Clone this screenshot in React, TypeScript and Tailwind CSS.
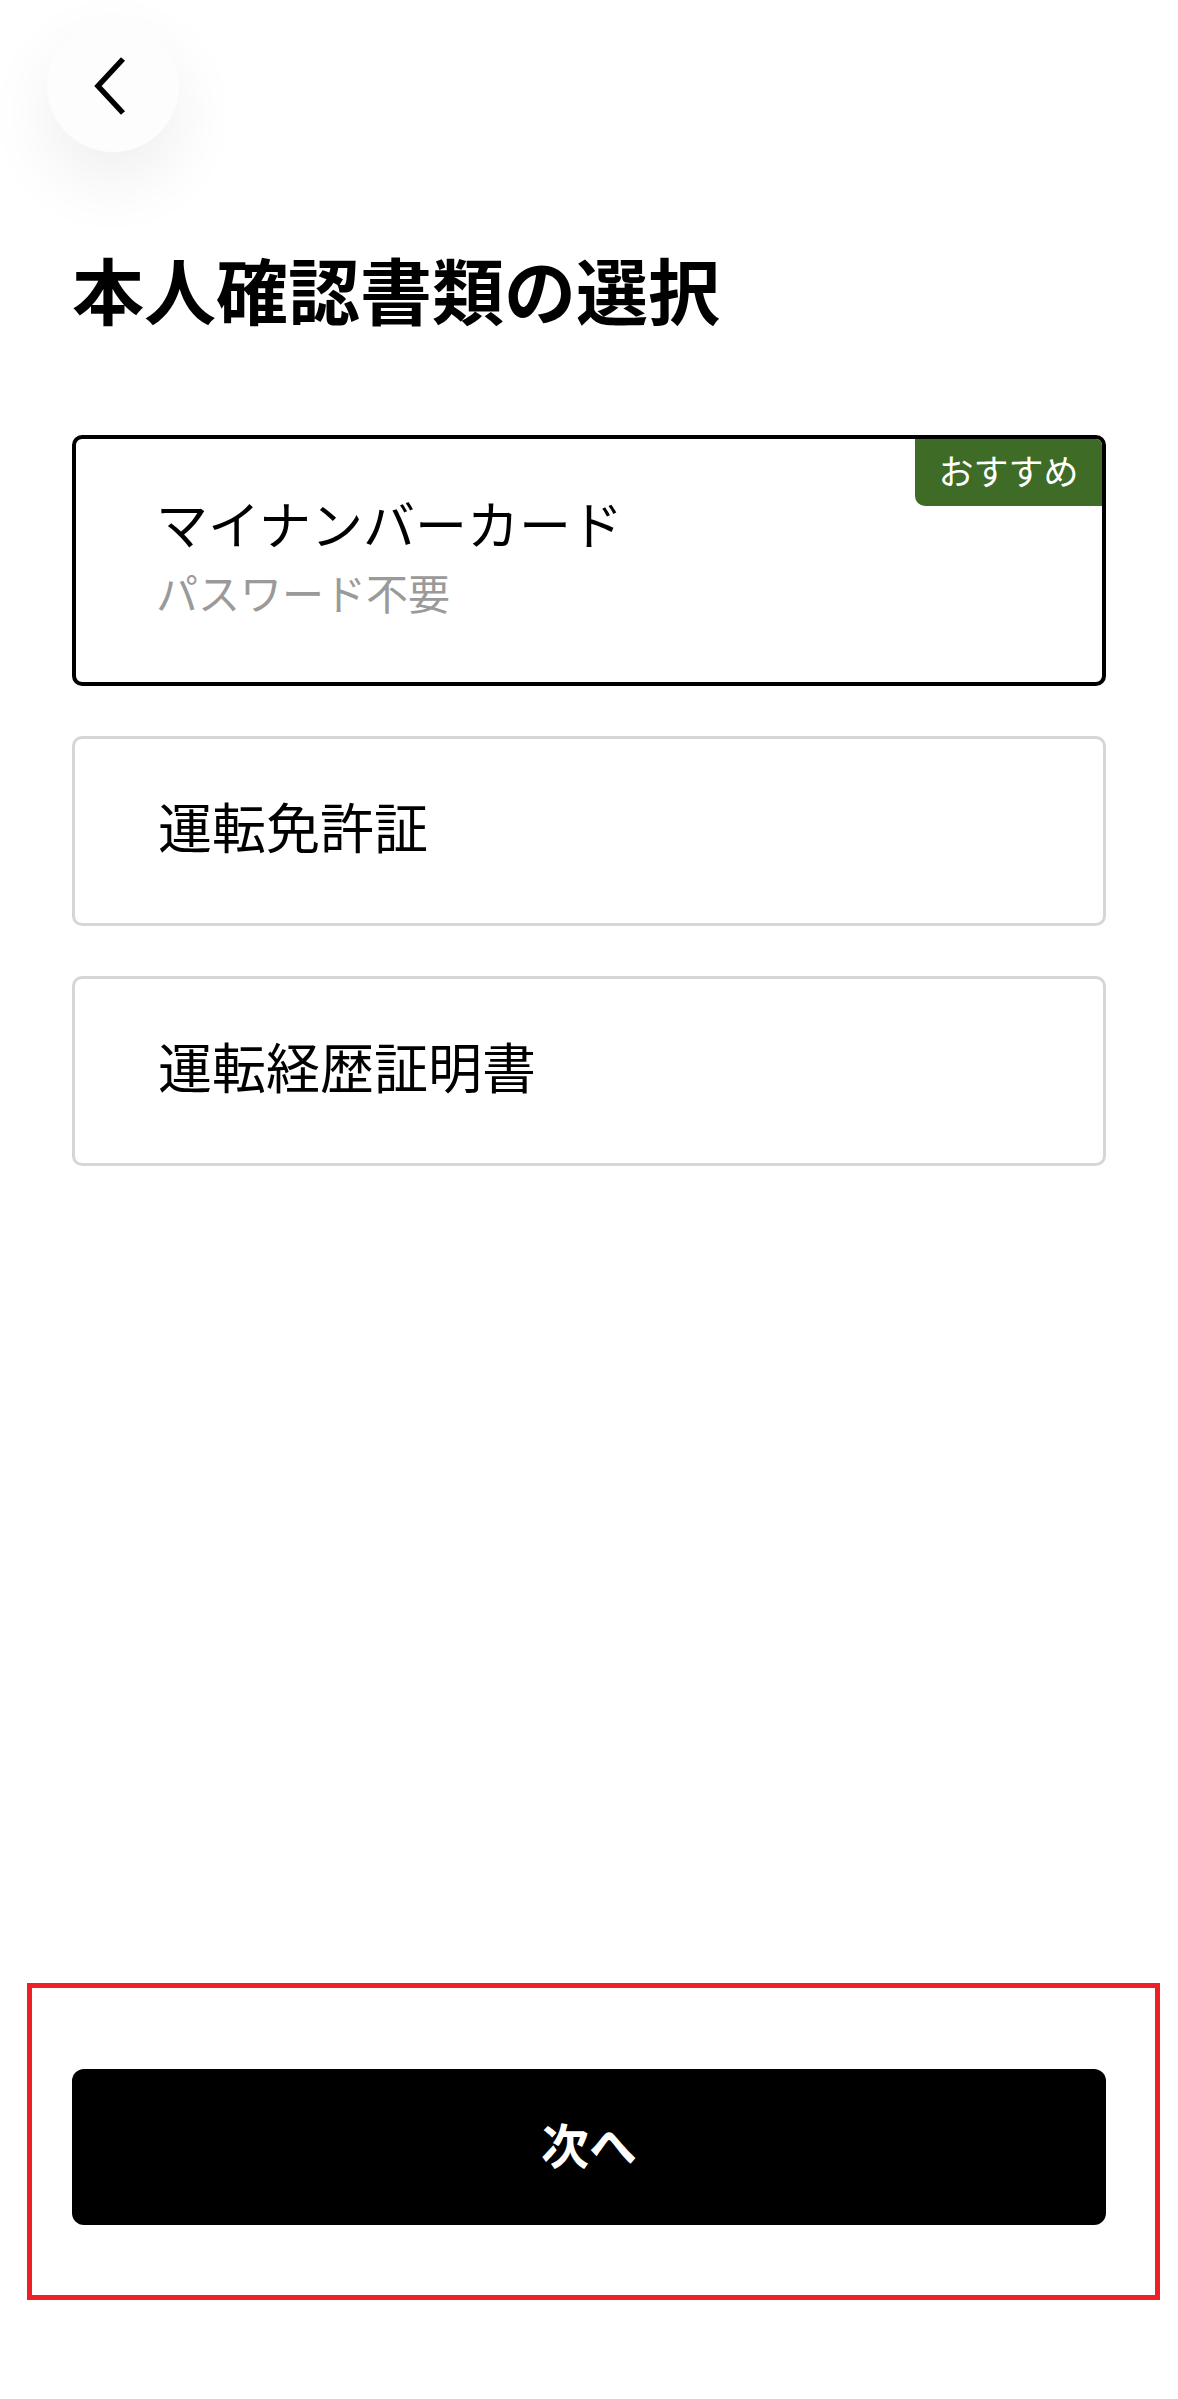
import React, { useState } from "react";

type DocOption = {
  id: string;
  label: string;
  note?: string;
  recommended?: boolean;
};

const options: DocOption[] = [
  { id: "mynumber", label: "マイナンバーカード", note: "パスワード不要", recommended: true },
  { id: "license", label: "運転免許証" },
  { id: "history", label: "運転経歴証明書" },
];

const font = { fontFamily: '"Noto Sans CJK JP", "Noto Sans", sans-serif' };

const BackButton = () => (
  <button
    aria-label="戻る"
    className="ml-[47px] mt-[20px] flex h-[132px] w-[132px] items-center justify-center rounded-full bg-[#fdfdfd] shadow-[0_28px_70px_rgba(0,0,0,0.07)]"
  >
    <svg width="40" height="60" viewBox="0 0 40 60" fill="none" className="-ml-[6px]">
      <polyline
        points="33,3 8,30 33,57"
        stroke="#000"
        strokeWidth="5.5"
        strokeLinecap="butt"
        strokeLinejoin="miter"
      />
    </svg>
  </button>
);

const OptionCard = ({
  option,
  selected,
  onSelect,
}: {
  option: DocOption;
  selected: boolean;
  onSelect: () => void;
}) => {
  if (option.note) {
    return (
      <button
        onClick={onSelect}
        className={`relative flex h-[251px] w-full flex-col justify-center rounded-[10px] bg-white pb-[12px] pl-[80px] text-left ${
          selected ? "border-4 border-black" : "border-[3px] border-[#d6d6d6]"
        }`}
      >
        {option.recommended && (
          <span className="absolute right-0 top-0 flex h-[67px] w-[187px] items-center justify-center rounded-bl-[10px] rounded-tr-[6px] bg-[#3e6b26] pb-[7px] text-[35px] leading-none text-white">
            おすすめ
          </span>
        )}
        <span className="text-[52px] leading-none text-black">{option.label}</span>
        <span className="mt-[22px] text-[42px] leading-none text-[#9a9a9a]">{option.note}</span>
      </button>
    );
  }

  return (
    <button
      onClick={onSelect}
      className={`flex h-[190px] w-full items-center rounded-[10px] bg-white pb-[10px] pl-[83px] text-left ${
        selected ? "border-4 border-black" : "border-[3px] border-[#d6d6d6]"
      }`}
    >
      <span className="text-[54px] leading-none text-black">{option.label}</span>
    </button>
  );
};

export default function App() {
  const [selected, setSelected] = useState("mynumber");

  return (
    <div className="flex min-h-[2399px] w-[1178px] flex-col bg-white" style={font}>
      <BackButton />

      <h1 className="ml-[72px] mt-[100px] text-[72px] font-bold leading-none text-black">
        本人確認書類の選択
      </h1>

      <div className="mx-[72px] mt-[111px] flex flex-col gap-[50px]">
        {options.map((o) => (
          <OptionCard
            key={o.id}
            option={o}
            selected={selected === o.id}
            onSelect={() => setSelected(o.id)}
          />
        ))}
      </div>

      <div className="mb-[99px] ml-[27px] mt-auto w-[1133px] border-[5px] border-[#ee1f26] pb-[70px] pl-[40px] pr-[49px] pt-[81px]">
        <button className="flex h-[156px] w-full items-center justify-center rounded-[12px] bg-black pb-[8px] text-[48px] font-bold leading-none text-white">
          次へ
        </button>
      </div>
    </div>
  );
}
